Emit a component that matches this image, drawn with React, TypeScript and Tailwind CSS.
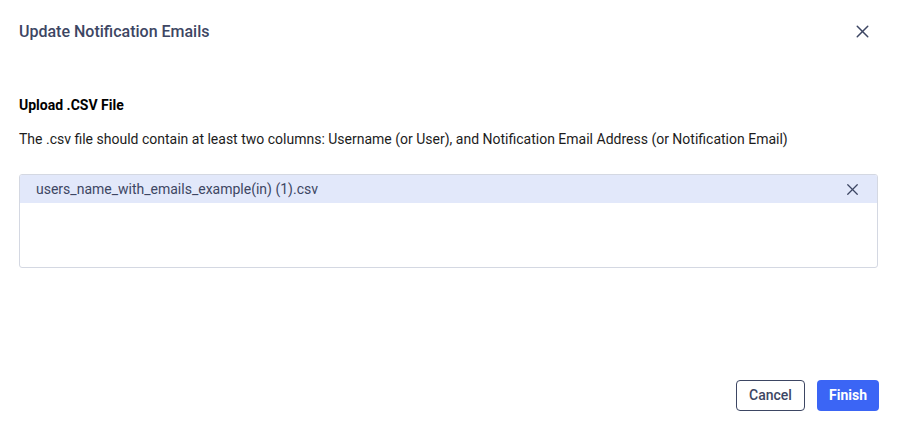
import { X } from "lucide-react";

export default function App() {
  return (
    <div className="w-[897px] h-[425px] bg-white flex flex-col font-['Roboto',sans-serif]">
      {/* Header */}
      <div className="flex items-center justify-between pl-[19px] pr-[24px] pt-[21px] h-[42px]">
        <h2 className="text-[16px] font-medium text-[#3d4663] leading-5">Update Notification Emails</h2>
        <button className="text-[#3d4663]">
          <X size={21} strokeWidth={1.7} />
        </button>
      </div>

      {/* Body */}
      <div className="flex flex-col px-[19px] pt-[53px] flex-1">
        <h3 className="text-[14px] font-bold text-black leading-5">Upload .CSV File</h3>
        <p className="text-[14px] text-[#1c1c1c] leading-5 mt-[14px]">
          The .csv file should contain at least two columns: Username (or User), and Notification Email Address (or Notification Email)
        </p>

        <div className="mt-[25px] h-[94px] rounded-[3px] border border-[#d4d8e2] overflow-hidden">
          <div className="h-[28px] bg-[#e2e8fa] flex items-center justify-between pl-[16px] pr-[15px]">
            <span className="text-[14px] text-[#3d4663]">users_name_with_emails_example(in) (1).csv</span>
            <X size={19} strokeWidth={1.6} className="text-[#3d4663]" />
          </div>
        </div>
      </div>

      {/* Footer */}
      <div className="flex justify-end gap-[12px] pr-[18px] pb-[14px]">
        <button className="h-[31px] w-[69px] rounded-[4px] border border-[#3d4663] text-[14px] font-medium text-[#3d4663] bg-white">
          Cancel
        </button>
        <button className="h-[31px] w-[62px] rounded-[4px] bg-[#3b65f5] text-[14px] font-bold text-white">
          Finish
        </button>
      </div>
    </div>
  );
}
